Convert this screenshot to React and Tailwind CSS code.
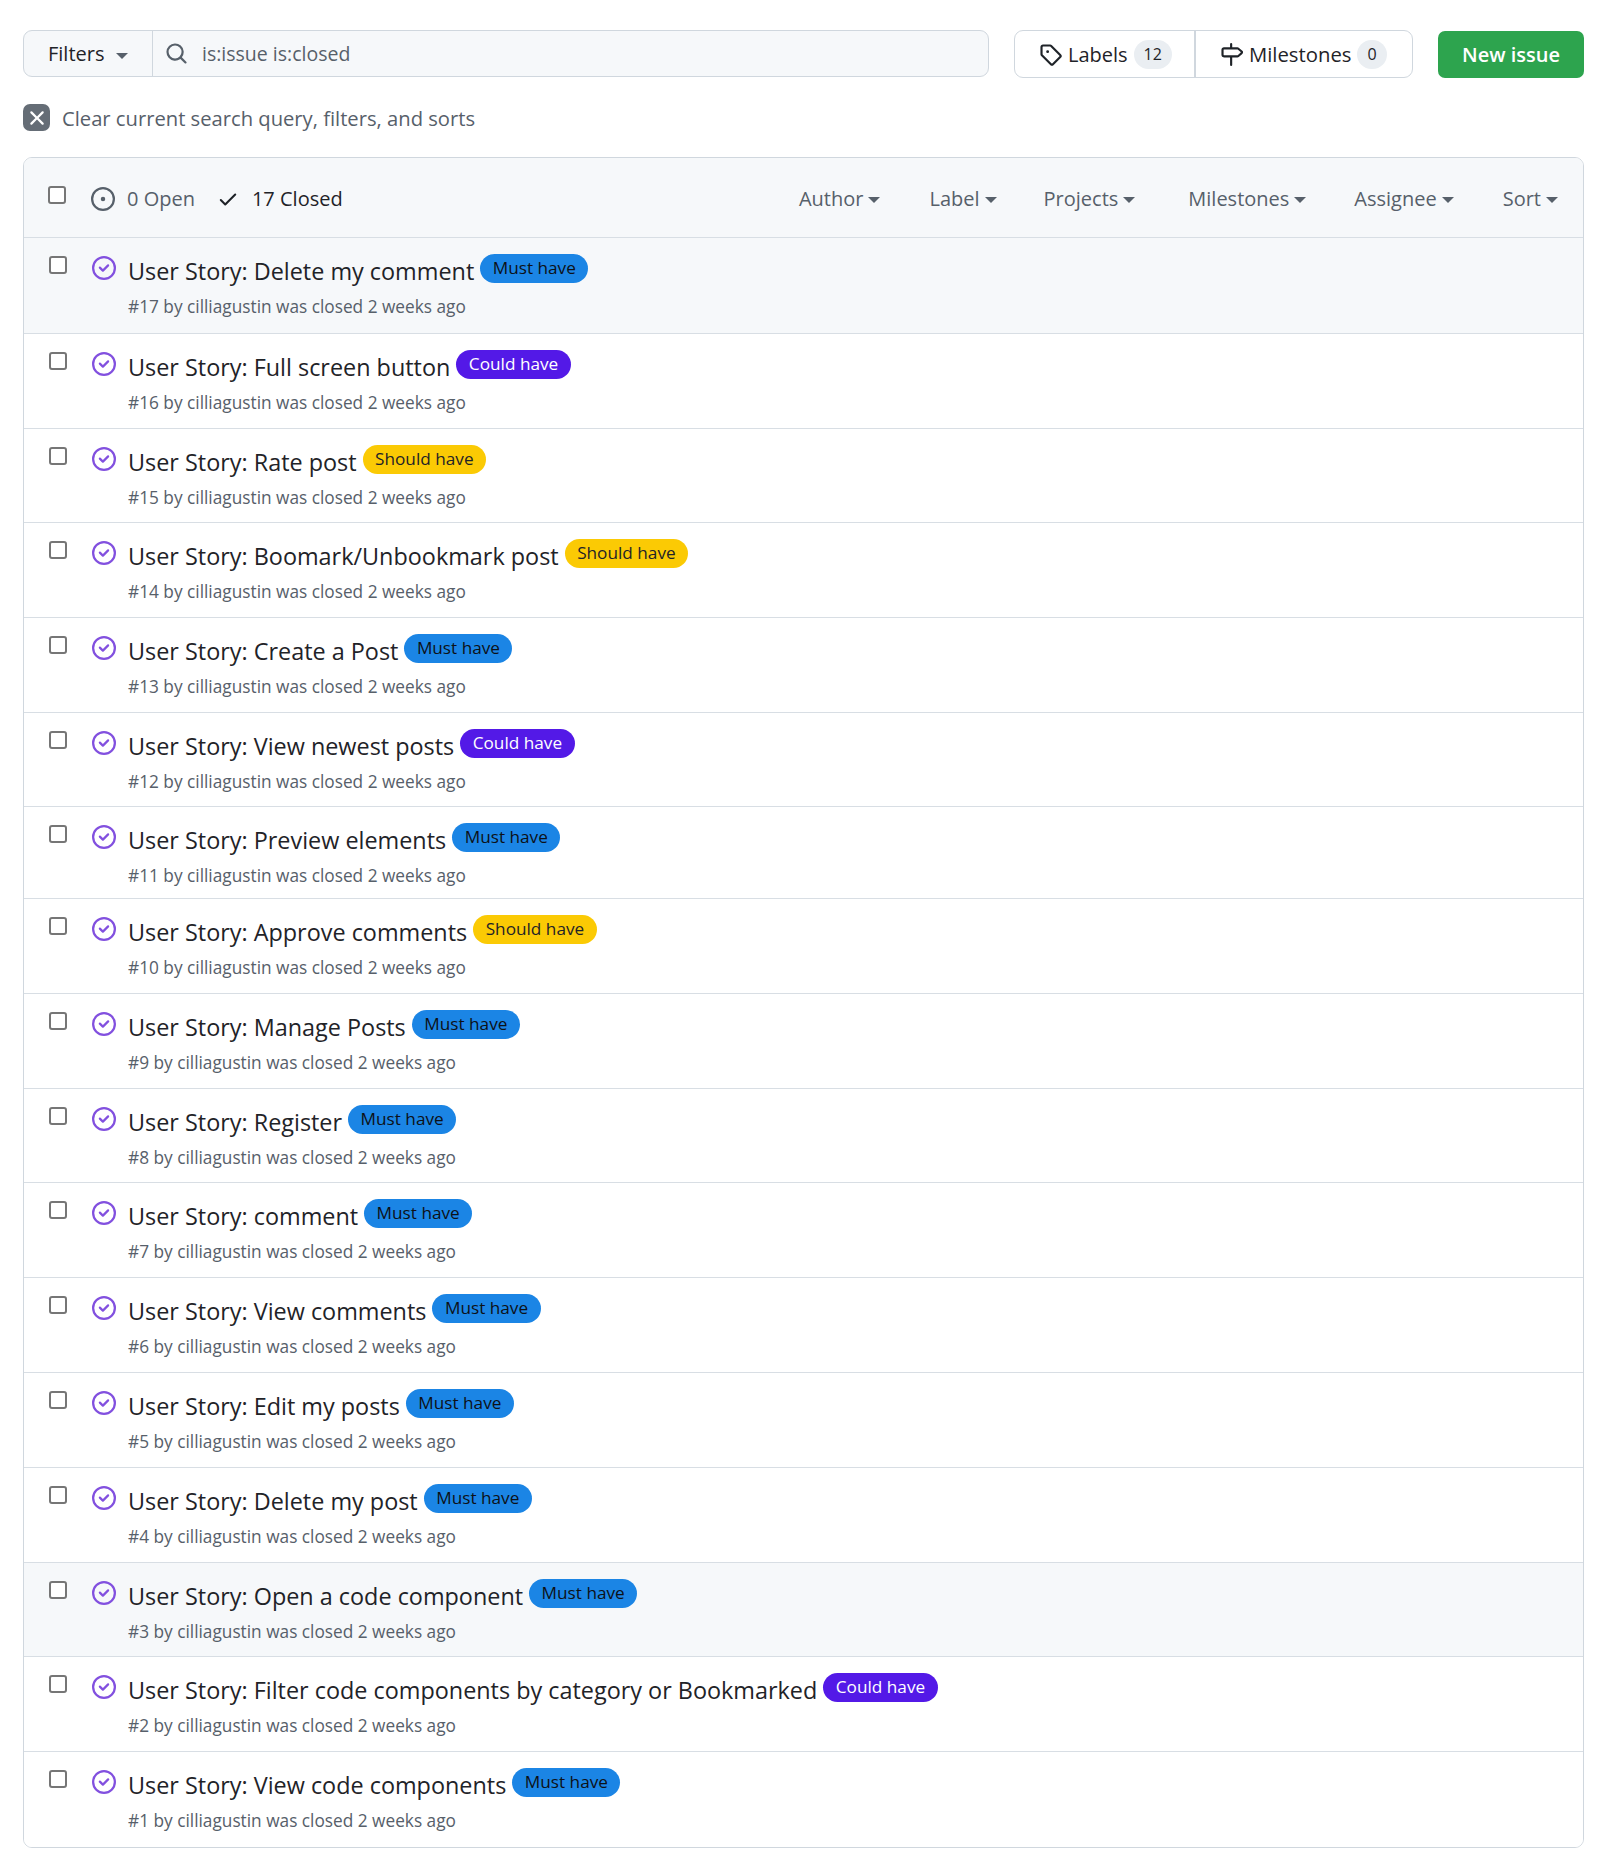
import React from 'react';

const ISSUES = [
  { n: 17, title: 'User Story: Delete my comment', label: 'must', h: 'h-[96px]', hover: true },
  { n: 16, title: 'User Story: Full screen button', label: 'could', h: 'h-[95px]' },
  { n: 15, title: 'User Story: Rate post', label: 'should', h: 'h-[94px]' },
  { n: 14, title: 'User Story: Boomark/Unbookmark post', label: 'should', h: 'h-[95px]' },
  { n: 13, title: 'User Story: Create a Post', label: 'must', h: 'h-[95px]' },
  { n: 12, title: 'User Story: View newest posts', label: 'could', h: 'h-[94px]' },
  { n: 11, title: 'User Story: Preview elements', label: 'must', h: 'h-[92px]' },
  { n: 10, title: 'User Story: Approve comments', label: 'should', h: 'h-[95px]' },
  { n: 9, title: 'User Story: Manage Posts', label: 'must', h: 'h-[95px]' },
  { n: 8, title: 'User Story: Register', label: 'must', h: 'h-[94px]' },
  { n: 7, title: 'User Story: comment', label: 'must', h: 'h-[95px]' },
  { n: 6, title: 'User Story: View comments', label: 'must', h: 'h-[95px]' },
  { n: 5, title: 'User Story: Edit my posts', label: 'must', h: 'h-[95px]' },
  { n: 4, title: 'User Story: Delete my post', label: 'must', h: 'h-[95px]' },
  { n: 3, title: 'User Story: Open a code component', label: 'must', h: 'h-[94px]', hover: true },
  { n: 2, title: 'User Story: Filter code components by category or Bookmarked', label: 'could', h: 'h-[95px]' },
  { n: 1, title: 'User Story: View code components', label: 'must', h: 'h-[95px]' },
];

const LABELS = {
  must: { text: 'Must have', cls: 'bg-[#1b85e5] text-[#0d1117]' },
  could: { text: 'Could have', cls: 'bg-[#5319e7] text-white' },
  should: { text: 'Should have', cls: 'bg-[#fbca04] text-[#1f2328]' },
};

const FILTERS = [
  { name: 'Author', cls: 'mr-[49px]' },
  { name: 'Label', cls: 'mr-[47px]' },
  { name: 'Projects', cls: 'mr-[53px]' },
  { name: 'Milestones', cls: 'mr-[48px]' },
  { name: 'Assignee', cls: 'mr-[49px]' },
  { name: 'Sort', cls: '' },
];

const Octicon = ({ d, className }) => (
  <svg viewBox="0 0 16 16" fill="currentColor" className={className}>
    <path d={d} />
  </svg>
);

const Caret = ({ className }) => (
  <span className={`inline-block w-0 h-0 border-x-[6px] border-x-transparent border-t-[6px] border-t-current ${className}`} />
);

const ICONS = {
  search: 'M10.68 11.74a6 6 0 0 1-7.922-8.982 6 6 0 0 1 8.982 7.922l3.04 3.04a.749.749 0 0 1-.326 1.275.749.749 0 0 1-.734-.215ZM11.5 7a4.499 4.499 0 1 0-8.997 0A4.499 4.499 0 0 0 11.5 7Z',
  tag: 'M1 7.775V2.75C1 1.784 1.784 1 2.75 1h5.025c.464 0 .91.184 1.238.513l6.25 6.25a1.75 1.75 0 0 1 0 2.474l-5.026 5.026a1.75 1.75 0 0 1-2.474 0l-6.25-6.25A1.752 1.752 0 0 1 1 7.775Zm1.5 0c0 .066.026.13.073.177l6.25 6.25a.25.25 0 0 0 .354 0l5.025-5.025a.25.25 0 0 0 0-.354l-6.25-6.25a.25.25 0 0 0-.177-.073H2.75a.25.25 0 0 0-.25.25ZM6 5a1 1 0 1 1 0 2 1 1 0 0 1 0-2Z',
  milestone: 'M7.75 0a.75.75 0 0 1 .75.75V3h3.634c.414 0 .814.147 1.13.414l2.07 1.75a1.75 1.75 0 0 1 0 2.672l-2.07 1.75a1.75 1.75 0 0 1-1.13.414H8.5v5.25a.75.75 0 0 1-1.5 0V10H2.75A1.75 1.75 0 0 1 1 8.25v-3.5C1 3.784 1.784 3 2.75 3H7V.75A.75.75 0 0 1 7.75 0Zm4.384 8.5a.25.25 0 0 0 .161-.059l2.07-1.75a.25.25 0 0 0 0-.382l-2.07-1.75a.25.25 0 0 0-.161-.059H2.75a.25.25 0 0 0-.25.25v3.5c0 .138.112.25.25.25h9.384Z',
  open: 'M8 9.5a1.5 1.5 0 1 0 0-3 1.5 1.5 0 0 0 0 3ZM8 0a8 8 0 1 1 0 16A8 8 0 0 1 8 0ZM1.5 8a6.5 6.5 0 1 0 13 0 6.5 6.5 0 0 0-13 0Z',
  closed: 'M11.28 6.78a.75.75 0 0 0-1.06-1.06L7.25 8.69 5.78 7.22a.75.75 0 0 0-1.06 1.06l2 2a.75.75 0 0 0 1.06 0l3.5-3.5ZM16 8A8 8 0 1 1 0 8a8 8 0 0 1 16 0Zm-1.5 0a6.5 6.5 0 1 0-13 0 6.5 6.5 0 0 0 13 0Z',
  check: 'M13.78 4.22a.75.75 0 0 1 0 1.06l-7.25 7.25a.75.75 0 0 1-1.06 0L2.22 9.28a.751.751 0 0 1 .018-1.042.751.751 0 0 1 1.042-.018L6 10.94l6.72-6.72a.75.75 0 0 1 1.06 0Z',
  x: 'M3.72 3.72a.75.75 0 0 1 1.06 0L8 6.94l3.22-3.22a.749.749 0 0 1 1.275.326.749.749 0 0 1-.215.734L9.06 8l3.22 3.22a.749.749 0 0 1-.326 1.275.749.749 0 0 1-.734-.215L8 9.06l-3.22 3.22a.751.751 0 0 1-1.042-.018.751.751 0 0 1-.018-1.042L6.94 8 3.72 4.78a.75.75 0 0 1 0-1.06Z',
};

const Checkbox = ({ className }) => (
  <span className={`block w-[18px] h-[18px] rounded-[3px] border-2 border-[#767676] bg-white shrink-0 ${className}`} />
);

const IssueRow = ({ issue }) => {
  const label = LABELS[issue.label];
  return (
    <div className={`flex border-b border-[#d8dee4] last:border-b-0 ${issue.h} ${issue.hover ? 'bg-[#f6f8fa]' : 'bg-white'}`}>
      <Checkbox className="ml-[25px] mt-[18px]" />
      <Octicon d={ICONS.closed} className="w-[24px] h-[24px] ml-[25px] mt-[18px] shrink-0 text-[#8250df]" />
      <div className="ml-[12px] min-w-0">
        <div className="flex items-start mt-[15px]">
          <span className="text-[23.4px] leading-[36px] font-medium text-[#1f2328]">{issue.title}</span>
          <span className={`ml-[6px] mt-[1px] h-[29px] px-[12.5px] rounded-full text-[17.2px] leading-[27px] font-medium ${label.cls}`}>{label.text}</span>
        </div>
        <p className="mt-[6px] text-[17.25px] leading-[24px] text-[#57606a]">#{issue.n} by cilliagustin was closed 2 weeks ago</p>
      </div>
    </div>
  );
};

const App = () => {
  return (
    <div className="w-[1599px] h-[1860px] bg-white text-[#1f2328] pt-[30px] pl-[23px] pr-[15px] font-['Open_Sans','Noto_Sans',sans-serif]">
      <div className="flex items-start">
        <div className="flex w-[966px] h-[47px] rounded-[9px] border border-[#d0d7de] bg-[#f6f8fa] overflow-hidden">
          <div className="flex items-center w-[129px] pl-[24px] pt-[1px] border-r border-[#d0d7de] text-[20px] font-medium">
            Filters
            <Caret className="ml-[12px] mt-[3px] text-[#57606a]" />
          </div>
          <div className="flex items-center flex-1 pl-[12px] text-[19.5px] text-[#57606a]">
            <Octicon d={ICONS.search} className="w-[23px] h-[23px] text-[#57606a]" />
            <span className="ml-[14px] mt-[1px]">is:issue is:closed</span>
          </div>
        </div>
        <div className="flex ml-[25px] w-[399px] h-[48px] rounded-[9px] border border-[#d0d7de] overflow-hidden text-[20px] font-medium">
          <div className="flex items-center w-[181px] pl-[24px] border-r-2 border-[#d0d7de]">
            <Octicon d={ICONS.tag} className="w-[23px] h-[23px]" />
            <span className="ml-[6px] mt-[1px]">Labels</span>
            <span className="ml-[6px] px-[10px] h-[29px] leading-[29px] rounded-full bg-[#eaeef2] text-[16px]">12</span>
          </div>
          <div className="flex items-center flex-1 pl-[24px]">
            <Octicon d={ICONS.milestone} className="w-[23px] h-[23px]" />
            <span className="ml-[6px] text-[20.3px]">Milestones</span>
            <span className="ml-[6px] px-[10px] h-[29px] leading-[29px] rounded-full bg-[#eaeef2] text-[16px]">0</span>
          </div>
        </div>
        <button className="ml-[25px] w-[146px] h-[47px] mt-[1px] rounded-[7px] bg-[#2da44e] text-white text-[20px] font-semibold">New issue</button>
      </div>

      <div className="flex items-center mt-[26px] h-[27px] text-[20.2px] font-medium text-[#57606a]">
        <span className="flex items-center justify-center w-[27px] h-[27px] rounded-[7px] bg-[#656d76] text-white">
          <Octicon d={ICONS.x} className="w-[24px] h-[24px]" />
        </span>
        <span className="ml-[12px] mt-[2px]">Clear current search query, filters, and sorts</span>
      </div>

      <div className="mt-[26px] w-[1561px] rounded-[9px] border border-[#d0d7de] overflow-hidden">
        <div className="flex items-center h-[80px] pt-[2px] bg-[#f6f8fa] border-b border-[#d8dee4] pl-[24px] pr-[25px] text-[20px]">
          <Checkbox className="mt-[-8px]" />
          <Octicon d={ICONS.open} className="w-[24px] h-[24px] ml-[25px] text-[#57606a]" />
          <span className="ml-[12px] text-[#57606a]">0 Open</span>
          <Octicon d={ICONS.check} className="w-[22px] h-[22px] ml-[22px]" />
          <span className="ml-[13px] font-medium">17 Closed</span>
          <div className="flex items-center ml-auto text-[#57606a]">
            {FILTERS.map((f) => (
              <span key={f.name} className={`flex items-center ${f.cls}`}>
                {f.name}
                <Caret className="ml-[5px] mt-[2px]" />
              </span>
            ))}
          </div>
        </div>
        {ISSUES.map((issue) => (
          <IssueRow key={issue.n} issue={issue} />
        ))}
      </div>
    </div>
  );
};

export default App;
